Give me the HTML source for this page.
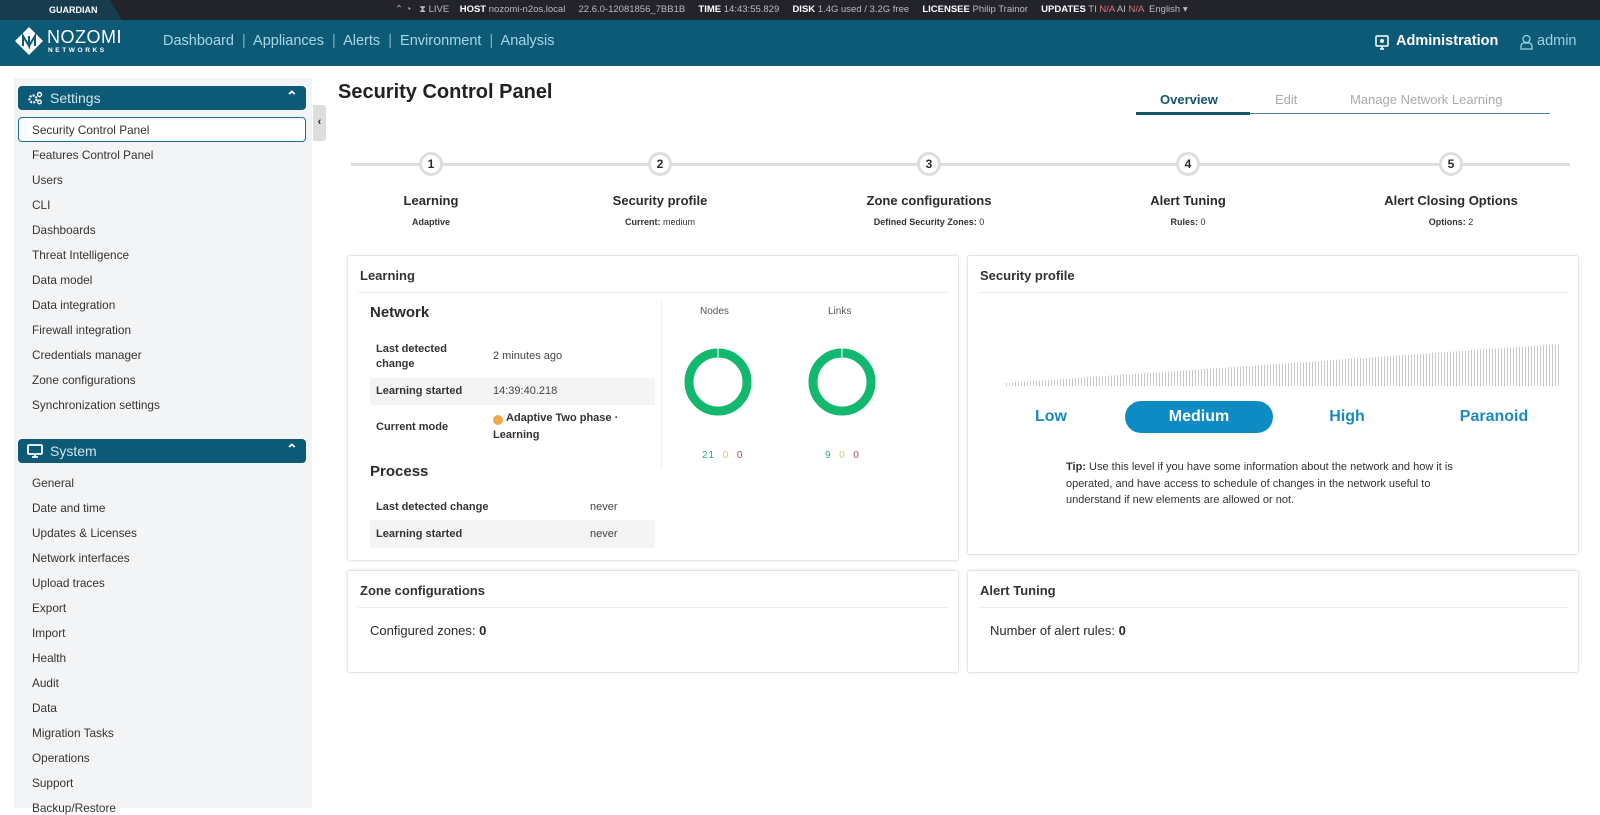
<!DOCTYPE html>
<html><head><meta charset="utf-8"><style>
*{box-sizing:border-box;margin:0;padding:0}
body{width:1600px;height:808px;overflow:hidden;background:#fff;font-family:"Liberation Sans",sans-serif;color:#2b2b2b;position:relative}
.a{position:absolute;white-space:nowrap}
#top{left:0;top:0;width:1600px;height:20px;background:#23242b;font-size:9.5px;color:#bbb;line-height:20px}
#top b{color:#fff}
#hdr{left:0;top:20px;width:1600px;height:46px;background:#0d5a76}
.nav{font-size:14.5px;color:#a9d6e6;top:33px}
#side{left:14px;top:78px;width:298px;height:730px;background:#f3f4f6}
.sh{left:18px;width:288px;height:24px;background:#0d5a76;border-radius:4px;color:#cfe6ef;font-size:14px;line-height:24px;padding-left:32px}
.si{left:32px;font-size:11.8px;color:#333}
.card{position:absolute;background:#fff;border:1px solid #e6e6e6;box-shadow:0 0 3px rgba(0,0,0,.08);border-radius:3px}
.ch{position:absolute;left:12px;top:12px;font-size:13px;font-weight:bold;color:#333}
.cl{position:absolute;left:10px;right:10px;top:36px;height:1px;background:#ececec}
.st{font-size:13px;font-weight:bold;color:#2b2b2b;transform:translateX(-50%)}
.ss{font-size:9px;color:#333;transform:translateX(-50%)}
.cir{position:absolute;width:24px;height:24px;border-radius:50%;background:#fff;border:3px solid #dedede;font-size:12px;font-weight:bold;text-align:center;line-height:18px;top:152px}
.lb{font-size:11px;font-weight:bold;color:#333}
.v{font-size:11px;color:#444}
.lvl{font-size:16px;font-weight:bold;color:#1a8abd;top:408px;transform:translateX(-50%)}
</style></head><body>
<div id="top" class="a">
 <div class="a" style="left:0;top:0;width:122px;height:20px;background:#173c4d;clip-path:polygon(0 0,110px 0,122px 20px,0 20px)"></div>
 <div class="a" style="left:49px;color:#fff;font-weight:bold;font-size:9px">GUARDIAN</div>
 <div class="a" style="left:395px">⌃ ◔ &nbsp; ⧗ LIVE &nbsp;&nbsp; <b>HOST</b> nozomi-n2os.local &nbsp;&nbsp;&nbsp; 22.6.0-12081856_7BB1B &nbsp;&nbsp;&nbsp; <b>TIME</b> 14:43:55.829 &nbsp;&nbsp;&nbsp; <b>DISK</b> 1.4G used / 3.2G free &nbsp;&nbsp;&nbsp; <b>LICENSEE</b> Philip Trainor &nbsp;&nbsp;&nbsp; <b>UPDATES</b> TI <span style="color:#d77">N/A</span> AI <span style="color:#d77">N/A</span> &nbsp;English ▾</div>
</div>
<div id="hdr" class="a"></div>
<svg class="a" style="left:14px;top:26px" width="30" height="30" viewBox="0 0 30 30"><path d="M15 1L29 15L15 29L1 15Z" fill="#fff"/><path d="M9 20V10l6 10V10M15 20l6-10v10" stroke="#0d5a76" stroke-width="2" fill="none"/></svg>
<div class="a" style="left:47px;top:27px;font-size:18px;color:#fff;letter-spacing:0.5px">NOZOMI</div>
<div class="a" style="left:48px;top:47px;font-size:6.5px;color:#fff;letter-spacing:2.6px;font-weight:bold">NETWORKS</div>
<div class="a nav" style="left:163px">Dashboard &nbsp;<span style="opacity:.7">|</span>&nbsp; Appliances &nbsp;<span style="opacity:.7">|</span>&nbsp; Alerts &nbsp;<span style="opacity:.7">|</span>&nbsp; Environment &nbsp;<span style="opacity:.7">|</span>&nbsp; Analysis</div>
<svg class="a" style="left:1375px;top:35px" width="14" height="15" viewBox="0 0 14 15"><rect x="1" y="1" width="12" height="10" rx="1" stroke="#fff" fill="none" stroke-width="1.5"/><circle cx="7" cy="6" r="2" fill="#fff"/><path d="M5 14h4M7 11v3" stroke="#fff" stroke-width="1.5"/></svg>
<div class="a" style="left:1396px;top:33px;font-size:14.5px;color:#fff;font-weight:bold">Administration</div>
<svg class="a" style="left:1520px;top:34px" width="13" height="16" viewBox="0 0 13 16"><circle cx="6.5" cy="5" r="3.5" stroke="#9fd0e2" fill="none" stroke-width="1.3"/><path d="M1 15v-3a3 3 0 013-3h5a3 3 0 013 3v3z" stroke="#9fd0e2" fill="none" stroke-width="1.3"/></svg>
<div class="a" style="left:1537px;top:33px;font-size:14.5px;color:#9fd0e2">admin</div>

<div id="side" class="a"></div>
<div class="a sh" style="top:86px">Settings</div>
<svg class="a" style="left:28px;top:91px" width="15" height="14" viewBox="0 0 15 14"><circle cx="5" cy="8" r="3.5" stroke="#fff" stroke-width="2.2" fill="none" stroke-dasharray="2 1.2"/><circle cx="11.5" cy="3.5" r="2" stroke="#fff" stroke-width="1.4" fill="none"/><circle cx="11.5" cy="11" r="1.8" stroke="#fff" stroke-width="1.3" fill="none"/></svg>
<div class="a" style="left:286px;top:88px;color:#fff;font-size:14px;font-weight:bold">⌃</div>
<div class="a" style="left:18px;top:117px;width:288px;height:25px;border:1.5px solid #1a7090;border-radius:4px;background:#fff"></div>
<div class="a si" style="top:123px">Security Control Panel</div>
<div class="a si" style="top:148px">Features Control Panel</div>
<div class="a si" style="top:173px">Users</div>
<div class="a si" style="top:198px">CLI</div>
<div class="a si" style="top:223px">Dashboards</div>
<div class="a si" style="top:248px">Threat Intelligence</div>
<div class="a si" style="top:273px">Data model</div>
<div class="a si" style="top:298px">Data integration</div>
<div class="a si" style="top:323px">Firewall integration</div>
<div class="a si" style="top:348px">Credentials manager</div>
<div class="a si" style="top:373px">Zone configurations</div>
<div class="a si" style="top:398px">Synchronization settings</div>
<div class="a sh" style="top:439px">System</div>
<svg class="a" style="left:27px;top:444px" width="16" height="14" viewBox="0 0 16 14"><rect x="1" y="1" width="14" height="9" rx="1" stroke="#fff" stroke-width="1.8" fill="none"/><path d="M5 13h6M8 10v3" stroke="#fff" stroke-width="1.8"/></svg>
<div class="a" style="left:286px;top:441px;color:#fff;font-size:14px;font-weight:bold">⌃</div>
<div class="a si" style="top:476px">General</div>
<div class="a si" style="top:501px">Date and time</div>
<div class="a si" style="top:526px">Updates &amp; Licenses</div>
<div class="a si" style="top:551px">Network interfaces</div>
<div class="a si" style="top:576px">Upload traces</div>
<div class="a si" style="top:601px">Export</div>
<div class="a si" style="top:626px">Import</div>
<div class="a si" style="top:651px">Health</div>
<div class="a si" style="top:676px">Audit</div>
<div class="a si" style="top:701px">Data</div>
<div class="a si" style="top:726px">Migration Tasks</div>
<div class="a si" style="top:751px">Operations</div>
<div class="a si" style="top:776px">Support</div>
<div class="a si" style="top:801px">Backup/Restore</div>
<div class="a" style="left:313px;top:105px;width:13px;height:36px;background:#ddd;border-radius:0 3px 3px 0;font-size:11px;font-weight:bold;text-align:center;line-height:34px">‹</div>

<div class="a" style="left:338px;top:81px;font-size:20px;font-weight:bold;color:#222">Security Control Panel</div>
<div class="a" style="left:1160px;top:92px;font-size:13px;font-weight:bold;color:#15556c">Overview</div>
<div class="a" style="left:1275px;top:92px;font-size:13px;color:#aaa">Edit</div>
<div class="a" style="left:1350px;top:92px;font-size:13px;color:#aaa">Manage Network Learning</div>
<div class="a" style="left:1136px;top:113px;width:414px;height:1px;background:#4d8596"></div>
<div class="a" style="left:1136px;top:112px;width:114px;height:3px;background:#15556c"></div>

<div class="a" style="left:351px;top:163px;width:1219px;height:3px;background:#dedede"></div>
<div class="cir" style="left:419px">1</div>
<div class="cir" style="left:648px">2</div>
<div class="cir" style="left:917px">3</div>
<div class="cir" style="left:1176px">4</div>
<div class="cir" style="left:1439px">5</div>
<div class="a st" style="left:431px;top:193px">Learning</div>
<div class="a st" style="left:660px;top:193px">Security profile</div>
<div class="a st" style="left:929px;top:193px">Zone configurations</div>
<div class="a st" style="left:1188px;top:193px">Alert Tuning</div>
<div class="a st" style="left:1451px;top:193px">Alert Closing Options</div>
<div class="a ss" style="left:431px;top:217px;font-weight:bold">Adaptive</div>
<div class="a ss" style="left:660px;top:217px"><b>Current:</b> medium</div>
<div class="a ss" style="left:929px;top:217px"><b>Defined Security Zones:</b> 0</div>
<div class="a ss" style="left:1188px;top:217px"><b>Rules:</b> 0</div>
<div class="a ss" style="left:1451px;top:217px"><b>Options:</b> 2</div>

<div class="card" style="left:347px;top:255px;width:612px;height:306px">
 <div class="ch">Learning</div><div class="cl"></div>
 <div class="a" style="left:22px;top:48px;font-size:15px;font-weight:bold">Network</div>
 <div class="a lb" style="left:28px;top:86px;line-height:15px;white-space:normal;width:100px">Last detected change</div>
 <div class="a v" style="left:145px;top:94px">2 minutes ago</div>
 <div class="a" style="left:22px;top:122px;width:285px;height:27px;background:#f4f4f4"></div>
 <div class="a lb" style="left:28px;top:129px">Learning started</div>
 <div class="a v" style="left:145px;top:129px">14:39:40.218</div>
 <div class="a lb" style="left:28px;top:165px">Current mode</div>
 <div class="a" style="left:145px;width:10px;height:10px;border-radius:50%;background:#f0a94a;top:159px"></div>
 <div class="a lb" style="left:158px;top:156px">Adaptive Two phase ·</div>
 <div class="a lb" style="left:145px;top:173px">Learning</div>
 <div class="a" style="left:22px;top:207px;font-size:15px;font-weight:bold">Process</div>
 <div class="a lb" style="left:28px;top:245px">Last detected change</div>
 <div class="a v" style="left:242px;top:245px">never</div>
 <div class="a" style="left:22px;top:264px;width:285px;height:28px;background:#f4f4f4"></div>
 <div class="a lb" style="left:28px;top:272px">Learning started</div>
 <div class="a v" style="left:242px;top:272px">never</div>
 <div class="a" style="left:313px;top:45px;width:1px;height:168px;background:#eee"></div>
 <div class="a" style="left:352px;top:50px;font-size:10px;color:#555">Nodes</div>
 <div class="a" style="left:480px;top:50px;font-size:10px;color:#555">Links</div>
 <svg class="a" style="left:335px;top:91px" width="70" height="70"><circle cx="35" cy="35" r="29" stroke="#12b86d" stroke-width="9" fill="none"/><path d="M35 1v9" stroke="#fff" stroke-width="1"/></svg>
 <svg class="a" style="left:459px;top:91px" width="70" height="70"><circle cx="35" cy="35" r="29" stroke="#12b86d" stroke-width="9" fill="none"/><path d="M35 1v9" stroke="#fff" stroke-width="1"/></svg>
 <div class="a" style="left:354px;top:194px;font-size:10px;letter-spacing:1px"><span style="color:#2aa88a">21</span> &nbsp;<span style="color:#e3c05a">0</span> &nbsp;<span style="color:#b0456a">0</span></div>
 <div class="a" style="left:477px;top:194px;font-size:10px;letter-spacing:1px"><span style="color:#2aa88a">9</span> &nbsp;<span style="color:#e3c05a">0</span> &nbsp;<span style="color:#b0456a">0</span></div>
</div>

<div class="card" style="left:967px;top:255px;width:612px;height:300px">
 <div class="ch">Security profile</div><div class="cl"></div>
 <svg class="a" style="left:38px;top:80px" width="555" height="52">
  <defs><pattern id="p" width="3" height="52" patternUnits="userSpaceOnUse"><rect width="1" height="52" fill="#c8c8c8"/></pattern></defs>
  <polygon points="0,50 555,50 555,8 0,47" fill="url(#p)"/>
 </svg>
</div>
<div class="a" style="left:1125px;top:401px;width:148px;height:32px;border-radius:16px;background:#0f8bc4"></div>
<div class="a lvl" style="left:1051px">Low</div>
<div class="a lvl" style="left:1199px;color:#fff">Medium</div>
<div class="a lvl" style="left:1347px">High</div>
<div class="a lvl" style="left:1494px">Paranoid</div>
<div class="a" style="left:1066px;top:459px;font-size:11px;line-height:16.5px;color:#333;white-space:normal;width:412px"><b>Tip:</b> Use this level if you have some information about the network and how it is operated, and have access to schedule of changes in the network useful to understand if new elements are allowed or not.</div>

<div class="card" style="left:347px;top:570px;width:612px;height:103px">
 <div class="ch">Zone configurations</div><div class="cl"></div>
 <div class="a" style="left:22px;top:52px;font-size:13px">Configured zones: <b>0</b></div>
</div>
<div class="card" style="left:967px;top:570px;width:612px;height:103px">
 <div class="ch">Alert Tuning</div><div class="cl"></div>
 <div class="a" style="left:22px;top:52px;font-size:13px">Number of alert rules: <b>0</b></div>
</div>
</body></html>
